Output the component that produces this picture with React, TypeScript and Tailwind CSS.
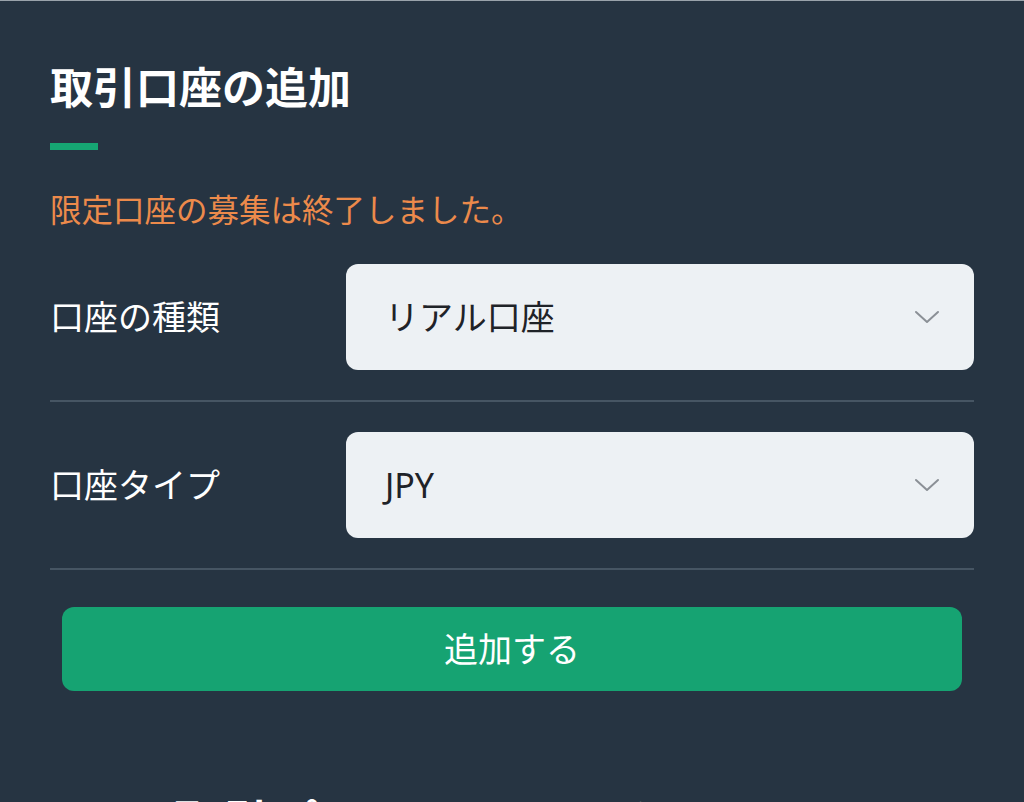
import * as React from 'react';

function Chevron() {
    return (
        <svg width="26" height="16" viewBox="0 0 26 16" fill="none" className="shrink-0">
            <path d="M2 3 L13 13 L24 3" stroke="#8b9096" strokeWidth="2" strokeLinecap="round" strokeLinejoin="round" />
        </svg>
    );
}

function SelectRow({ label, value }: { label: string; value: string }) {
    return (
        <div className="flex items-center">
            <div className="w-[296px] shrink-0 text-[34px] leading-none text-white">{label}</div>
            <div className="flex h-[106px] flex-1 items-center justify-between rounded-[12px] bg-[#edf1f4] pl-[39px] pr-[34px]">
                <span className="text-[34px] leading-none text-[#1f2328]">{value}</span>
                <Chevron />
            </div>
        </div>
    );
}

export default function App() {
    return (
        <div
            className="h-[802px] w-[1024px] overflow-hidden border-t border-[#9aa3ab] bg-[#263442] px-[50px] pt-[55px]"
            style={{ fontFamily: '"Noto Sans", "Noto Sans CJK JP", sans-serif' }}
        >
            <h2 className="text-[43px] font-bold leading-[64px] text-white">取引口座の追加</h2>
            <div className="mt-[23px] h-[7px] w-[48px] bg-[#16a673]" />
            <p className="mt-[38px] text-[31.5px] leading-[44px] text-[#ec8a4b]">限定口座の募集は終了しました。</p>

            <div className="mt-[32px]">
                <SelectRow label="口座の種類" value="リアル口座" />
            </div>
            <div className="mt-[30px] h-[2px] bg-[#465563]" />
            <div className="mt-[30px]">
                <SelectRow label="口座タイプ" value="JPY" />
            </div>
            <div className="mt-[30px] h-[2px] bg-[#465563]" />

            <button className="mx-[12px] mt-[37px] flex h-[84px] w-[900px] items-center justify-center rounded-[12px] bg-[#16a372] text-[34px] leading-none text-white">
                追加する
            </button>

            <h3 className="mt-[107px] pl-[124px] text-[44px] font-bold leading-none tracking-[6px] text-white">取引プラットフォーム</h3>
        </div>
    );
}
